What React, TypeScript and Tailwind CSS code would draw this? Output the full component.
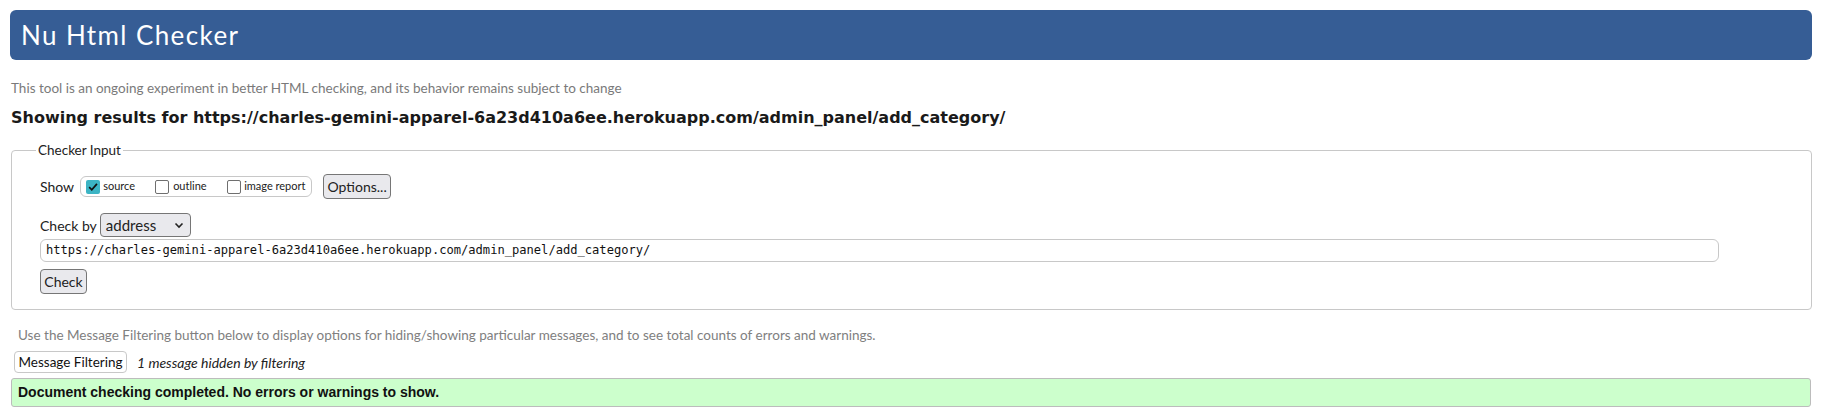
import React from 'react';

const SANS = "font-['Lato',sans-serif]";

const DESC =
  'This tool is an ongoing experiment in better HTML checking, and its behavior remains subject to change';
const FILTER_HINT =
  'Use the Message Filtering button below to display options for hiding/showing particular messages, and to see total counts of errors and warnings.';
const URL = 'https://charles-gemini-apparel-6a23d410a6ee.herokuapp.com/admin_panel/add_category/';

const Checkbox: React.FC<{ checked?: boolean }> = ({ checked }) =>
  checked ? (
    <span className="flex h-[14px] w-[14px] shrink-0 items-center justify-center rounded-[2px] bg-[#3cb4c4]">
      <svg viewBox="0 0 14 14" className="h-[12px] w-[12px]">
        <path d="M2.5 7.2 L5.6 10.2 L11.6 3.4" fill="none" stroke="#111" strokeWidth="2" />
      </svg>
    </span>
  ) : (
    <span className="block h-[14px] w-[14px] shrink-0 rounded-[2px] border-[1.5px] border-[#6f6f6f] bg-white" />
  );

export default function App() {
  return (
    <div className={`min-h-screen bg-white pl-[10px] pr-[13px] pt-[10px] ${SANS}`}>
      <div className="flex h-[50px] items-center rounded-[6px] bg-[#365d95] pl-[11px] text-[26px] tracking-[1.4px] text-white">
        Nu Html Checker
      </div>

      <p className="mt-[18px] pl-[1px] text-[13.5px] leading-[20px] text-[#7a7a7a]">{DESC}</p>

      <h2 className="mt-[9px] pl-[1px] font-['DejaVu_Sans',sans-serif] text-[16px] font-bold leading-[22px] text-[#1a1a1a]">
        Showing results for {URL}
      </h2>

      <fieldset className="mt-[11px] ml-[1px] rounded-[4px] border border-[#c8c8c8] px-[24px] pb-[15px]">
        <legend className="px-[2px] text-[13.5px] leading-[20px] text-[#222]">Checker Input</legend>

        <div className="ml-[4px] mt-[14px] flex h-[25px] items-center text-[14px] text-[#222]">
          <span>Show</span>
          <div className="ml-[6px] flex h-[21px] w-[232px] items-center rounded-[6px] border border-[#c8c8c8] pl-[5px] text-[11px]">
            <Checkbox checked />
            <span className="ml-[3px] w-[52px]">source</span>
            <Checkbox />
            <span className="ml-[4px] w-[54px]">outline</span>
            <Checkbox />
            <span className="ml-[3px]">image report</span>
          </div>
          <button className="ml-[11px] h-[25px] w-[68px] rounded-[4px] border border-[#767676] bg-[#e9e9ed] text-[14px]">
            Options...
          </button>
        </div>

        <div className="ml-[4px] mt-[14px] flex h-[24px] items-center text-[14px] text-[#222]">
          <span>Check by</span>
          <div className="ml-[3px] flex h-[24px] w-[91px] items-center justify-between rounded-[4px] border border-[#767676] bg-[#e9e9ed] pl-[5px] pr-[6px] text-[15px]">
            <span>address</span>
            <svg viewBox="0 0 10 10" className="h-[10px] w-[10px]">
              <path d="M1.5 3.5 L5 7 L8.5 3.5" fill="none" stroke="#222" strokeWidth="1.6" />
            </svg>
          </div>
        </div>

        <div className="ml-[4px] mt-[2px] flex h-[23px] w-[1679px] items-center rounded-[6px] border border-[#c8c8c8] px-[5px] font-['DejaVu_Sans_Mono',monospace] text-[12.1px] text-[#111]">
          {URL}
        </div>

        <button className="ml-[4px] mt-[7px] block h-[25px] w-[47px] rounded-[4px] border border-[#767676] bg-[#e9e9ed] text-[14px] text-[#222]">
          Check
        </button>
      </fieldset>

      <p className="mt-[15px] pl-[8px] text-[13.5px] leading-[20px] text-[#808080]">{FILTER_HINT}</p>

      <div className="mt-[6px] flex items-center">
        <button className="ml-[4px] h-[22px] w-[113px] rounded-[4px] border border-[#c8c8c8] bg-white text-[13.5px] text-[#111]">
          Message Filtering
        </button>
        <span className="ml-[10px] text-[14px] italic text-[#222]">1 message hidden by filtering</span>
      </div>

      <div className="mx-[1px] mt-[5px] flex h-[29px] items-center rounded-[3px] border border-[#bcbcbc] bg-[#ccffcc] pl-[6px] font-['Liberation_Sans',Arial,sans-serif] text-[14px] font-bold text-[#111]">
        Document checking completed. No errors or warnings to show.
      </div>
    </div>
  );
}
